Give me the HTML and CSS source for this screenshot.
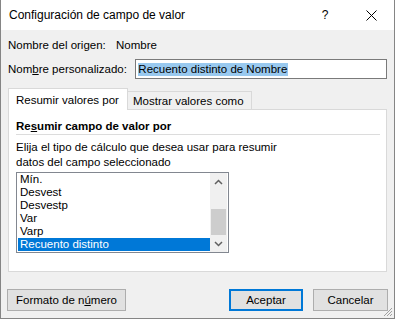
FILE: index.html
```html
<!DOCTYPE html>
<html lang="es">
<head>
  <meta charset="UTF-8">
  <meta name="viewport" content="width=device-width, initial-scale=1.0">
  <title>Configuración de campo de valor</title>
  <link rel="stylesheet" href="styles.css">
</head>
<body>
  <div class="dialog">
    <div class="titlebar">
      <span class="title">Configuración de campo de valor</span>
      <span class="caption-btn help">?</span>
      <span class="caption-btn close">
        <svg width="11" height="11" viewBox="0 0 11 11"><path d="M0.5 0.5 L10.5 10.5 M10.5 0.5 L0.5 10.5" stroke="#000" stroke-width="1" fill="none"/></svg>
      </span>
    </div>

    <div class="content">
      <div class="row source">
        <span class="label">Nombre del origen:</span>
        <span>Nombre</span>
      </div>
      <div class="row custom">
        <span class="label">Nom<u>b</u>re personalizado:</span>
        <div class="input"><span class="selected-text">Recuento distinto de Nombre</span></div>
      </div>

      <div class="tabs">
        <div class="tab active">Resumir valores por</div>
        <div class="tab">Mostrar valores como</div>
      </div>
      <div class="panel">
        <div class="group-title">Re<u>s</u>umir campo de valor por</div>
        <div class="separator"></div>
        <p class="hint">Elija el tipo de cálculo que desea usar para resumir<br>datos del campo seleccionado</p>
        <div class="listbox">
          <ul class="items">
            <li>Mín.</li>
            <li>Desvest</li>
            <li>Desvestp</li>
            <li>Var</li>
            <li>Varp</li>
            <li class="selected">Recuento distinto</li>
          </ul>
          <div class="scrollbar">
            <div class="arrow">
              <svg width="9" height="6" viewBox="0 0 9 6"><path d="M1 5 L4.5 1.5 L8 5" stroke="#606060" stroke-width="1.5" fill="none"/></svg>
            </div>
            <div class="track"><div class="thumb"></div></div>
            <div class="arrow">
              <svg width="9" height="6" viewBox="0 0 9 6"><path d="M1 1 L4.5 4.5 L8 1" stroke="#606060" stroke-width="1.5" fill="none"/></svg>
            </div>
          </div>
        </div>
      </div>

      <div class="buttons">
        <button class="btn format">Formato de n<u>ú</u>mero</button>
        <button class="btn default">Aceptar</button>
        <button class="btn cancel">Cancelar</button>
      </div>
    </div>

    <svg class="grip" width="10" height="10" viewBox="0 0 10 10">
      <path d="M9 1 L1 9 M9 4 L4 9 M9 7 L7 9" stroke="#a0a0a0" stroke-width="1" fill="none"/>
    </svg>
  </div>
</body>
</html>
```

FILE: styles.css
```css
body {
  margin: 0;
  font-family: "Liberation Sans", Arial, sans-serif;
  font-size: 11.5px;
  color: #000;
  background-color: #fff;
}
.dialog {
  position: relative;
  width: 395px;
  height: 319px;
  box-sizing: border-box;
  border: 1px solid #858585;
  border-top: none;
  background-color: #f0f0f0;
  display: flex;
  flex-direction: column;
}

/* title bar */
.titlebar {
  height: 30px;
  background-color: #fff;
  display: flex;
  align-items: center;
  padding-left: 8px;
}
.title {
  font-size: 12px;
  flex: 1;
}
.caption-btn {
  width: 46px;
  height: 30px;
  display: flex;
  align-items: center;
  justify-content: center;
}
.help {
  font-size: 12px;
}

/* body */
.content {
  padding: 0 7px;
  display: flex;
  flex-direction: column;
}
.row {
  display: flex;
  align-items: center;
}
.source {
  margin-top: 7px;
  height: 16px;
}
.source .label {
  width: 108px;
}
.custom {
  margin-top: 6px;
  height: 20px;
}
.custom .label {
  width: 128px;
}
.input {
  width: 253px;
  height: 20px;
  box-sizing: border-box;
  border: 1px solid #7a7a7a;
  background-color: #fff;
  display: flex;
  align-items: center;
  padding-left: 2px;
}
.selected-text {
  background-color: #99c9ef;
  line-height: 13px;
  padding-right: 1px;
}

/* tabs */
.tabs {
  margin-top: 8px;
  display: flex;
  align-items: flex-end;
  height: 22px;
}
.tab {
  box-sizing: border-box;
  border: 1px solid #d9d9d9;
  border-bottom: none;
  display: flex;
  align-items: center;
}
.tab.active {
  width: 120px;
  height: 22px;
  padding-left: 7px;
  background-color: #fff;
  position: relative;
  z-index: 1;
  margin-bottom: -1px;
}
.tab:not(.active) {
  width: 124px;
  height: 18px;
  padding-left: 5px;
  border-left: none;
  padding-top: 1px;
}
.panel {
  width: 379px;
  height: 163px;
  box-sizing: border-box;
  border: 1px solid #d9d9d9;
  background-color: #fff;
  padding: 0 6px 0 7px;
}
.group-title {
  font-weight: bold;
  margin-top: 8px;
  line-height: 16px;
}
.separator {
  height: 1px;
  background-color: #dcdcdc;
}
.hint {
  margin: 5px 0 0;
  line-height: 15px;
}

/* list box */
.listbox {
  margin-top: 2px;
  width: 213px;
  height: 81px;
  box-sizing: border-box;
  border: 1px solid #828790;
  display: flex;
}
.items {
  list-style: none;
  margin: 0;
  padding: 0 0 0 1px;
  width: 192px;
}
.items li {
  height: 13px;
  line-height: 13px;
  padding-left: 2px;
}
.items li.selected {
  background-color: #0078d7;
  color: #fff;
}
.scrollbar {
  width: 17px;
  background-color: #f0f0f0;
  display: flex;
  flex-direction: column;
}
.arrow {
  height: 17px;
  display: flex;
  align-items: center;
  justify-content: center;
}
.track {
  flex: 1;
  display: flex;
  flex-direction: column;
  justify-content: flex-end;
}
.thumb {
  height: 26px;
  margin: 0 1px;
  background-color: #cdcdcd;
}

/* buttons */
.buttons {
  margin-top: 17px;
  display: flex;
}
.btn {
  font-family: inherit;
  font-size: 11.5px;
  height: 22px;
  box-sizing: border-box;
  border: 1px solid #adadad;
  background-color: #e1e1e1;
  color: #000;
  padding: 0;
}
.btn.format {
  width: 119px;
  margin-left: -1px;
}
.btn.default {
  width: 74px;
  margin-left: auto;
  border: 2px solid #0078d7;
}
.btn.cancel {
  width: 75px;
  margin-left: 10px;
  margin-right: -1px;
}
.grip {
  position: absolute;
  right: 1px;
  bottom: 1px;
}
```
